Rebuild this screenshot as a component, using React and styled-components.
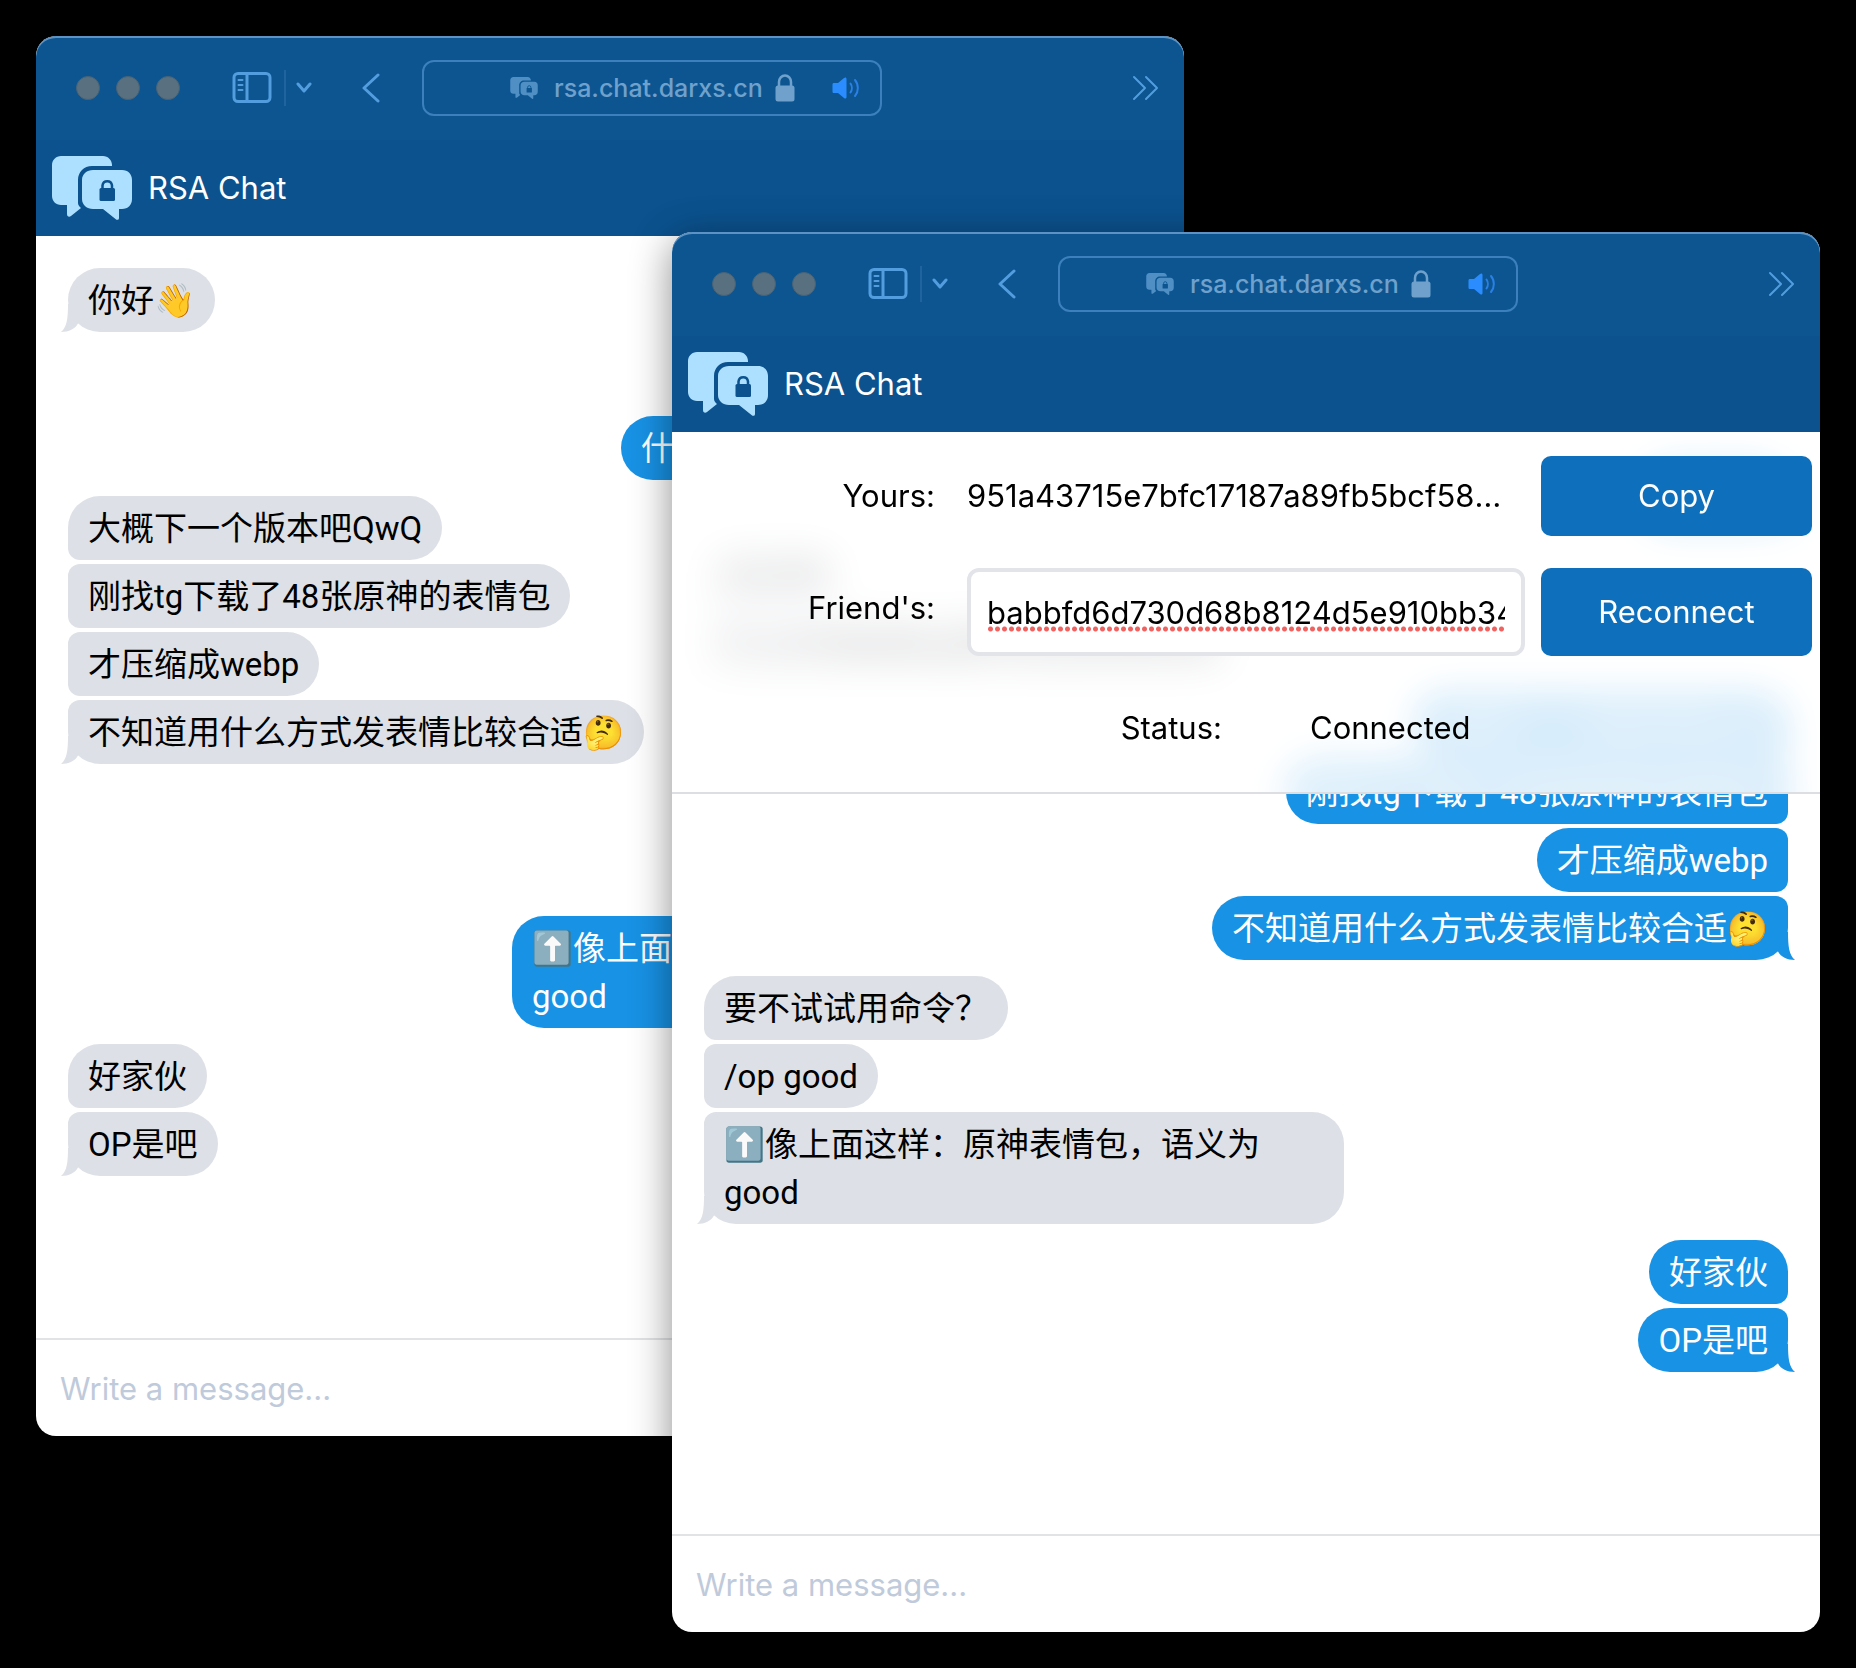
import React, { useId } from "react";
import styled, { createGlobalStyle, css } from "styled-components";

const GlobalStyle = createGlobalStyle`
  *, *::before, *::after { box-sizing: border-box; }
  body {
    margin: 0;
    background: #000;
    font-family: Inter, "Noto Sans CJK SC", "Noto Color Emoji", sans-serif;
  }
  button, input { font: inherit; color: inherit; margin: 0; }
`;

const Desktop = styled.main`
  position: relative;
  height: 100vh;
  min-height: 1668px;
  min-width: 1400px;
  overflow: hidden;
`;

const Window = styled.section`
  position: absolute;
  width: calc(100% - 708px);
  height: calc(100% - 268px);
  display: flex;
  flex-direction: column;
  overflow: hidden;
  background: #fff;
  border-radius: 20px;
  ${(p) =>
    p.$front
      ? css`right: 36px; bottom: 36px; z-index: 2; box-shadow: 0 8px 40px rgba(0, 0, 0, 0.45);`
      : css`left: 36px; top: 36px; z-index: 1;`}
`;

const Toolbar = styled.div`
  flex: none;
  display: flex;
  align-items: center;
  height: 104px;
  padding: 0 24px 0 40px;
  background: #0c5591;
  border-radius: 20px 20px 0 0;
  box-shadow: inset 0 2px 0 #5c93c4;
  color: #539ddf;
`;

const Lights = styled.div`
  display: flex;
  gap: 16px;
  margin-right: 52px;
`;

const Light = styled.span`
  width: 24px;
  height: 24px;
  border-radius: 50%;
  background: #58707f;
  border: 1px solid #4a6375;
`;

const ToolButton = styled.button`
  display: flex;
  padding: 0;
  border: 0;
  background: none;
  cursor: pointer;
`;

const Divider = styled.span`
  width: 2px;
  height: 36px;
  margin: 0 10px 0 12px;
  background: #1f649d;
`;

const BackButton = styled(ToolButton)`
  margin: 0 41px 0 49px;
`;

const Address = styled.div`
  flex: 0 0 460px;
  display: flex;
  align-items: center;
  height: 56px;
  margin-right: auto;
  padding: 0 20px 0 86px;
  border: 2px solid #3c80bd;
  border-radius: 12px;
  color: #6fa1cc;
`;

const Host = styled.span`
  margin: 0 12px 0 16px;
  font-size: 25px;
  font-weight: 500;
  line-height: 32px;
`;

const SoundButton = styled(ToolButton)`
  margin-left: auto;
`;

const AppBar = styled.header`
  flex: none;
  display: flex;
  align-items: center;
  gap: 16px;
  height: 96px;
  padding: 0 16px;
  background: #0b528e;
`;

const Title = styled.h1`
  margin: 0;
  color: #fff;
  font-size: 31px;
  font-weight: 400;
  line-height: 48px;
`;

const Content = styled.div`
  position: relative;
  flex: 1;
  min-height: 0;
  display: flex;
  flex-direction: column;
`;

const Thread = styled.ol`
  flex: 1;
  display: flex;
  flex-direction: column;
  gap: 16px;
  margin: 0;
  padding: 32px;
  list-style: none;
`;

const Group = styled.li`
  display: flex;
  flex-direction: column;
  align-items: ${(p) => (p.$mine ? "flex-end" : "flex-start")};
  gap: 4px;
`;

const joinLeft = css`
  &:not(:first-child) { border-top-left-radius: 12px; }
  &:not(:last-child) { border-bottom-left-radius: 12px; }
`;
const joinRight = css`
  &:not(:first-child) { border-top-right-radius: 12px; }
  &:not(:last-child) { border-bottom-right-radius: 12px; }
`;

const Bubble = styled.p`
  position: relative;
  max-width: 640px;
  margin: 0;
  padding: 9px 20px 7px;
  border-radius: 32px;
  font-family: Roboto, "Noto Sans CJK SC", "Noto Color Emoji", sans-serif;
  font-size: 33px;
  line-height: 48px;
  background: ${(p) => (p.$mine ? "#1892e5" : "#dde0e6")};
  color: ${(p) => (p.$mine ? "#fff" : "#000")};
  ${(p) => (p.$mine ? joinRight : joinLeft)}
`;

const TailShape = styled.svg`
  position: absolute;
  bottom: 0;
  ${(p) => (p.$mine ? "right: -7px; transform: scaleX(-1);" : "left: -7px;")}
  fill: ${(p) => (p.$mine ? "#1892e5" : "#dde0e6")};
`;

const Panel = styled.form`
  position: absolute;
  inset: 0 0 auto;
  z-index: 1;
  display: grid;
  gap: 32px;
  padding: 24px 0;
  border-bottom: 2px solid #dcdee2;
  font-size: 31px;
  line-height: 48px;

  /* The frosted layer reaches past the panel and is masked back to its edge. */
  &::before {
    content: "";
    position: absolute;
    inset: 0 0 -80px;
    z-index: -1;
    background: rgba(255, 255, 255, 0.81);
    backdrop-filter: blur(18px);
    mask-image: linear-gradient(#000 calc(100% - 80px), transparent calc(100% - 80px));
  }
`;

const Row = styled.div`
  display: grid;
  grid-template-columns: ${(p) => (p.$halves ? "1fr 1fr" : "1fr 2fr 1fr")};
  align-items: start;
`;

const Cell = styled.div`
  min-width: 0;
  padding: 0 8px;
`;

const Label = styled.label`
  padding-right: 24px;
  line-height: 80px;
  text-align: right;
`;

const KeyText = styled.output`
  display: block;
  padding-right: 16px;
  overflow: hidden;
  line-height: 80px;
  text-overflow: ellipsis;
  white-space: nowrap;
`;

const StatusText = styled.output`
  padding-left: 64px;
  line-height: 80px;
`;

const KeyInput = styled.input`
  display: block;
  width: 100%;
  height: 88px;
  padding: 0 16px;
  border: 4px solid #e2e4e9;
  border-radius: 12px;
  outline: none;
  background:
    radial-gradient(circle, #f0625f 2px, transparent 3px) 0 54px / 7px 6px repeat-x content-box,
    #fff;
`;

const Action = styled.button`
  display: block;
  width: 100%;
  height: ${(p) => (p.$tall ? 88 : 80)}px;
  border: 0;
  border-radius: 10px;
  background: #0e70bc;
  color: #fff;
  cursor: pointer;
`;

const Composer = styled.form`
  flex: none;
  display: flex;
  height: 98px;
  border-top: 2px solid #e2e3e5;
`;

const MessageInput = styled.input`
  flex: 1;
  min-width: 0;
  padding: 0 24px;
  border: 0;
  outline: none;
  background: none;
  font-size: 31px;
  &::placeholder { color: #bfcadb; opacity: 1; }
`;

const Stroke = ({ width, height, weight = 3, children }) => (
  <svg width={width} height={height} viewBox={`0 0 ${width} ${height}`} fill="none" stroke="currentColor"
    strokeWidth={weight} strokeLinecap="round" strokeLinejoin="round" aria-hidden="true">
    {children}
  </svg>
);

const ChatLogo = ({ width, height, color, hole }) => (
  <svg width={width} height={height} viewBox="0 0 80 64" aria-hidden="true">
    <path fill={color} d="M9 0H51C56 0 60 4 60 9V10H40C32 10 26 16 26 24V47C26 49 27 50 29 52L19 60C17 61.500 15 60.500 15 58V49H9C4 49 0 45 0 40V9C0 4 4 0 9 0Z" />
    <path fill={color} d="M41 14H70C76 14 80 18 80 24V43C80 49 76 53 70 53H67V62C67 64 65 64.500 63.500 63L51 53H41C35 53 30 49 30 43V24C30 18 35 14 41 14Z" />
    <rect x="47.500" y="32" width="15.500" height="13" rx="1.500" fill={hole} />
    <path d="M50.500 33V29.500A4.800 5 0 0 1 60 29.500V33" fill="none" stroke={hole} strokeWidth="2.500" />
  </svg>
);

const LockIcon = () => (
  <svg width="20" height="28" viewBox="0 0 20 28" aria-hidden="true">
    <rect x="0.500" y="11.500" width="19" height="16" rx="2.500" fill="currentColor" />
    <path d="M4 13V8A6 6.500 0 0 1 16 8V13" fill="none" stroke="currentColor" strokeWidth="2.500" />
  </svg>
);

const SpeakerIcon = () => (
  <svg width="28" height="22" viewBox="0 0 28 22" aria-hidden="true">
    <path fill="#2a8cff" d="M2 6H6L12 1C13.500 0 14.500 0.500 14.500 2V20C14.500 21.500 13.500 22 12 21L6 16H2C1 16 0.500 15.500 0.500 14.500V7.500C0.500 6.500 1 6 2 6Z" />
    <path d="M18.500 6.500C20.300 9 20.300 13 18.500 15.500M23 3C26.800 7.500 26.800 14.500 23 19" fill="none" stroke="#2a80e6" strokeWidth="2" strokeLinecap="round" />
  </svg>
);

const Tail = ({ mine }) => (
  <TailShape $mine={mine} width="24" height="28" viewBox="0 0 24 28" aria-hidden="true">
    <path d="M7 0C7 14 6 23 0 28C8 28 14 25 17 19.500L22 14V0Z" />
  </TailShape>
);

const conversation = [
  { from: "a", lines: ["你好👋"] },
  { from: "b", lines: ["你好啊", "什么时候能像tg那样发送表情包呀"] },
  { from: "a", lines: ["大概下一个版本吧QwQ", "刚找tg下载了48张原神的表情包", "才压缩成webp", "不知道用什么方式发表情比较合适🤔"] },
  { from: "b", lines: ["要不试试用命令？", "/op good", "⬆️像上面这样：原神表情包，语义为good"] },
  { from: "a", lines: ["好家伙", "OP是吧"] },
];

function BrowserToolbar() {
  return (
    <Toolbar>
      <Lights>
        <Light />
        <Light />
        <Light />
      </Lights>
      <ToolButton aria-label="Show sidebar">
        <Stroke width={40} height={32} weight={3}>
          <rect x="2" y="1.500" width="36" height="28" rx="4" />
          <path d="M15 2V29" />
          <path strokeWidth="2" d="M6.500 8H10.500M6.500 13H10.500M6.500 18H10.500" />
        </Stroke>
      </ToolButton>
      <Divider />
      <ToolButton aria-label="Tab groups">
        <Stroke width={16} height={12}>
          <path d="M2 2L8 9L14 2" />
        </Stroke>
      </ToolButton>
      <BackButton aria-label="Back">
        <Stroke width={20} height={30}>
          <path d="M17 2L3 15L17 28" />
        </Stroke>
      </BackButton>
      <Address>
        <ChatLogo width={28} height={22} color="#4f8fc4" hole="#0c5591" />
        <Host>rsa.chat.darxs.cn</Host>
        <LockIcon />
        <SoundButton aria-label="Mute tab">
          <SpeakerIcon />
        </SoundButton>
      </Address>
      <ToolButton aria-label="More tools">
        <Stroke width={28} height={26} weight={2}>
          <path d="M2 2L13 13L2 24M14 2L25 13L14 24" />
        </Stroke>
      </ToolButton>
    </Toolbar>
  );
}

function ConnectionPanel() {
  const id = useId();
  return (
    <Panel onSubmit={(e) => e.preventDefault()}>
      <Row>
        <Label htmlFor={`${id}-own`}>Yours:</Label>
        <Cell>
          <KeyText id={`${id}-own`}>951a43715e7bfc17187a89fb5bcf58d20c46</KeyText>
        </Cell>
        <Cell>
          <Action type="button">Copy</Action>
        </Cell>
      </Row>
      <Row>
        <Label htmlFor={`${id}-friend`}>Friend's:</Label>
        <Cell>
          <KeyInput id={`${id}-friend`} spellCheck={false} defaultValue="babbfd6d730d68b8124d5e910bb34f7" />
        </Cell>
        <Cell>
          <Action $tall>Reconnect</Action>
        </Cell>
      </Row>
      <Row $halves>
        <Label htmlFor={`${id}-status`}>Status:</Label>
        <StatusText id={`${id}-status`}>Connected</StatusText>
      </Row>
    </Panel>
  );
}

function ChatWindow({ me, front, children }) {
  return (
    <Window $front={front} aria-label="RSA Chat">
      <BrowserToolbar />
      <AppBar>
        <ChatLogo width={80} height={64} color="#addfff" hole="#0b528e" />
        <Title>RSA Chat</Title>
      </AppBar>
      <Content>
        <Thread>
          {conversation.map((group, i) => {
            const mine = group.from === me;
            return (
              <Group key={i} $mine={mine}>
                {group.lines.map((line, j) => (
                  <Bubble key={j} $mine={mine}>
                    {line}
                    {j === group.lines.length - 1 && <Tail mine={mine} />}
                  </Bubble>
                ))}
              </Group>
            );
          })}
        </Thread>
        {children}
      </Content>
      <Composer onSubmit={(e) => e.preventDefault()}>
        <MessageInput aria-label="Message" placeholder="Write a message..." />
      </Composer>
    </Window>
  );
}

export default function App() {
  return (
    <>
      <GlobalStyle />
      <Desktop>
        <ChatWindow me="b" />
        <ChatWindow me="a" front>
          <ConnectionPanel />
        </ChatWindow>
      </Desktop>
    </>
  );
}
